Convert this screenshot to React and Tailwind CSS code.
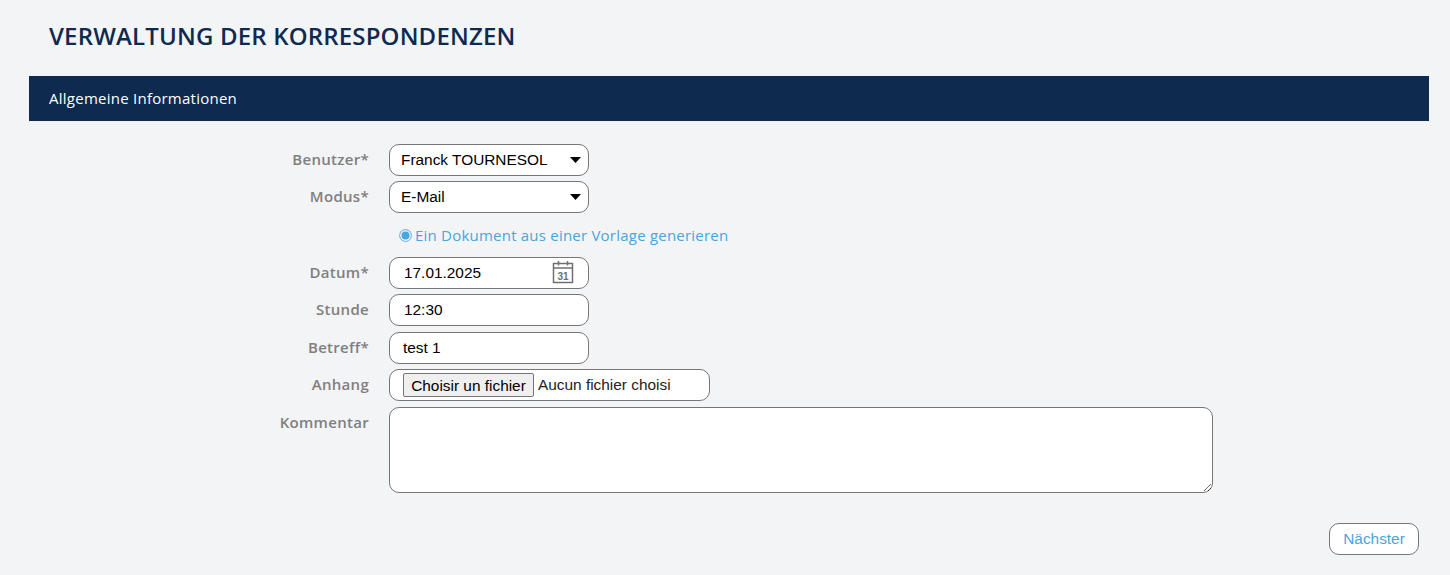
const labelClass =
  "w-[360px] pr-5 text-right text-[15px] leading-5 tracking-[0.3px] font-semibold text-[#7f7f7f] font-['Open_Sans',sans-serif]";
const fieldClass =
  "h-[32px] w-[200px] rounded-[10px] border border-[#767676] bg-white text-[15.4px] text-black outline-none font-['Liberation_Sans',Arial,sans-serif]";

function Row({ label, className = "", children }) {
  return (
    <div className={`flex items-center ${className}`}>
      <label className={`${labelClass} -mt-[3px]`}>{label}</label>
      {children}
    </div>
  );
}

function SelectField({ value }) {
  return (
    <div className="relative">
      <select className={`${fieldClass} appearance-none pl-[11px]`} defaultValue={value}>
        <option>{value}</option>
      </select>
      <svg width="11" height="6" viewBox="0 0 11 6" className="pointer-events-none absolute top-[13px] right-[8px]">
        <path d="M0 0h11L5.5 6z" fill="#000" />
      </svg>
    </div>
  );
}

function CalendarIcon() {
  return (
    <svg width="22" height="24" viewBox="0 0 22 24" fill="none" stroke="#707070" className="absolute top-[3px] right-[15px]">
      <rect x="1.5" y="3.5" width="19" height="19" strokeWidth="1.5" />
      <path d="M1.5 8h19" strokeWidth="1.5" />
      <path d="M6.5 1v4.5M15.5 1v4.5" strokeWidth="1.5" />
      <text x="11" y="19.5" textAnchor="middle" fontSize="10" fontWeight="700" fill="#707070" stroke="none" fontFamily="'Liberation Sans', sans-serif">
        31
      </text>
    </svg>
  );
}

export default function App() {
  return (
    <div className="h-[575px] overflow-hidden bg-[#f3f4f6] pl-[29px] pr-[21px]">
      <h1 className="pt-[19px] pl-5 text-[24px] leading-[33px] tracking-[0.17px] font-semibold text-[#0e2a4f] font-['Open_Sans',sans-serif]">
        VERWALTUNG DER KORRESPONDENZEN
      </h1>

      <div className="mt-[24px] flex h-[45px] items-center bg-[#0e2a4f] px-5 text-[15px] tracking-[0.25px] font-medium text-white font-['Open_Sans',sans-serif]">
        Allgemeine Informationen
      </div>

      <form className="mt-[23px]">
        <Row label="Benutzer*">
          <SelectField value="Franck TOURNESOL" />
        </Row>

        <Row label="Modus*" className="mt-[5px]">
          <SelectField value="E-Mail" />
        </Row>

        <div className="mt-[12px] flex h-[20px] items-center pl-[370px] text-[15px] tracking-[0.22px] text-[#4aa5dc] font-['Open_Sans',sans-serif]">
          <input
            type="radio"
            name="source"
            defaultChecked
            className="m-0 h-[13px] w-[13px] appearance-none rounded-full border border-[#7fbfe6] bg-[#4aa5dc] shadow-[inset_0_0_0_1.5px_#f3f4f6]"
          />
          <span className="ml-[3px]">Ein Dokument aus einer Vorlage generieren</span>
        </div>

        <Row label="Datum*" className="mt-[12px]">
          <div className="relative">
            <input type="text" readOnly value="17.01.2025" className={`${fieldClass} px-[14px]`} />
            <CalendarIcon />
          </div>
        </Row>

        <Row label="Stunde" className="mt-[5px]">
          <input type="text" readOnly value="12:30" className={`${fieldClass} px-[14px]`} />
        </Row>

        <Row label="Betreff*" className="mt-[6px]">
          <input type="text" readOnly value="test 1" className={`${fieldClass} px-[13px]`} />
        </Row>

        <Row label="Anhang" className="mt-[5px]">
          <div className="flex h-[32px] w-[321px] items-center rounded-[10px] border border-[#767676] bg-white pl-[13px] text-[15.4px] text-[#222] font-['Liberation_Sans',Arial,sans-serif]">
            <button type="button" className="h-[24px] w-[131px] rounded-[2px] border border-[#767676] bg-[#efefef] text-black">
              Choisir un fichier
            </button>
            <span className="ml-[4px]">Aucun fichier choisi</span>
          </div>
        </Row>

        <div className="mt-[6px] flex">
          <label className={`${labelClass} pt-[5px]`}>Kommentar</label>
          <textarea className="h-[86px] w-[824px] rounded-[10px] border border-[#767676] bg-white outline-none" />
        </div>

        <div className="mt-[30px] flex justify-end pr-[10px]">
          <button type="button" className="h-[32px] w-[90px] rounded-[10px] border border-[#767676] bg-white text-[15.4px] text-[#4aa5dc] font-['Liberation_Sans',Arial,sans-serif]">
            Nächster
          </button>
        </div>
      </form>
    </div>
  );
}
